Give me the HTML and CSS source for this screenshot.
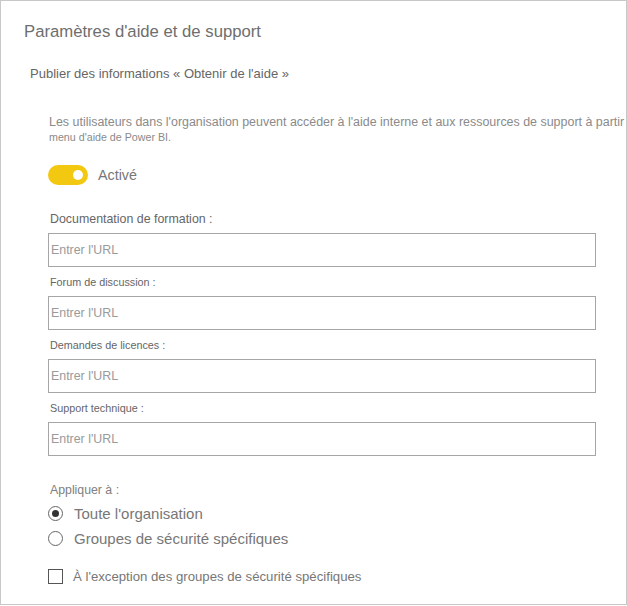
FILE: index.html
```html
<!DOCTYPE html>
<html lang="fr">
<head>
<meta charset="utf-8">
<title>Paramètres d'aide et de support</title>
<link rel="stylesheet" href="styles.css">
</head>
<body>
<div class="frame">
  <h1 class="title">Paramètres d'aide et de support</h1>
  <h2 class="subtitle">Publier des informations « Obtenir de l'aide »</h2>
  <div class="section">
    <p class="desc"><span class="desc-line">Les utilisateurs dans l'organisation peuvent accéder à l'aide interne et aux ressources de support à partir</span><span class="desc-line2">menu d'aide de Power BI.</span></p>
    <div class="toggle-row">
      <span class="toggle"><span class="knob"></span></span>
      <span class="toggle-label">Activé</span>
    </div>
    <div class="field first">
      <label class="label label-lg">Documentation de formation :</label>
      <div class="input">Entrer l'URL</div>
    </div>
    <div class="field">
      <label class="label">Forum de discussion :</label>
      <div class="input">Entrer l'URL</div>
    </div>
    <div class="field">
      <label class="label">Demandes de licences :</label>
      <div class="input">Entrer l'URL</div>
    </div>
    <div class="field">
      <label class="label">Support technique :</label>
      <div class="input">Entrer l'URL</div>
    </div>
    <div class="apply">
      <div class="label apply-label">Appliquer à :</div>
      <div class="radios">
        <div class="radio-row"><span class="radio checked"></span><span class="opt">Toute l'organisation</span></div>
        <div class="radio-row"><span class="radio"></span><span class="opt">Groupes de sécurité spécifiques</span></div>
      </div>
      <div class="check-row"><span class="checkbox"></span><span class="check-label">À l'exception des groupes de sécurité spécifiques</span></div>
    </div>
  </div>
</div>
</body>
</html>
```
FILE: styles.css
```css
* { box-sizing: border-box; }
html, body { margin: 0; padding: 0; background: #fff; }
body { font-family: "Liberation Sans", Arial, sans-serif; color: #666; }
.frame {
  width: 627px;
  height: 605px;
  border: 1px solid #c8c8c8;
  overflow: hidden;
  background: #fff;
}
.title {
  margin: 21px 0 0 23px;
  font-size: 16.7px;
  line-height: 20px;
  font-weight: normal;
  color: #6e6e6e;
  white-space: nowrap;
}
.subtitle {
  margin: 24px 0 0 29px;
  font-size: 13px;
  line-height: 16px;
  font-weight: normal;
  color: #666;
  white-space: nowrap;
}
.section { padding-left: 47px; }
.desc {
  margin: 33px 0 0 1px;
  display: flex;
  flex-direction: column;
  white-space: nowrap;
  color: #8a8a8a;
}
.desc-line { font-size: 12.45px; line-height: 15px; }
.desc-line2 { font-size: 10.7px; line-height: 15px; }
.toggle-row {
  margin-top: 20px;
  display: flex;
  align-items: center;
  gap: 10px;
}
.toggle {
  width: 40px;
  height: 20px;
  border-radius: 10px;
  background: #f2c811;
  display: flex;
  align-items: center;
  justify-content: flex-end;
  padding-right: 5px;
}
.knob {
  width: 10px;
  height: 10px;
  border-radius: 50%;
  background: #fff;
}
.toggle-label { font-size: 14.3px; line-height: 20px; color: #777; }
.field { margin-top: 8px; }
.field.first { margin-top: 27px; }
.label {
  display: block;
  font-size: 10.8px;
  line-height: 14px;
  color: #666;
  padding-left: 2px;
  white-space: nowrap;
}
.label-lg { font-size: 12.4px; }
.input {
  margin-top: 7px;
  width: 548px;
  height: 34px;
  border: 1px solid #a6a6a6;
  padding-left: 2px;
  display: flex;
  align-items: center;
  font-size: 12.4px;
  color: #9a9a9a;
}
.apply { margin-top: 27px; }
.apply-label { font-size: 12.3px; color: #808080; }
.radios { margin-top: 4px; display: flex; flex-direction: column; }
.radio-row {
  display: flex;
  align-items: center;
  gap: 11px;
  height: 25px;
}
.radio {
  width: 15px;
  height: 15px;
  border-radius: 50%;
  border: 1px solid #666;
  display: flex;
  align-items: center;
  justify-content: center;
  flex: none;
}
.radio.checked::after {
  content: "";
  width: 7px;
  height: 7px;
  border-radius: 50%;
  background: #333;
}
.opt { font-size: 15px; color: #777; white-space: nowrap; }
.check-row {
  margin-top: 18px;
  display: flex;
  align-items: center;
  gap: 10px;
}
.checkbox {
  width: 15px;
  height: 15px;
  border: 1px solid #555;
  flex: none;
}
.check-label { font-size: 13.2px; color: #777; white-space: nowrap; }
```
